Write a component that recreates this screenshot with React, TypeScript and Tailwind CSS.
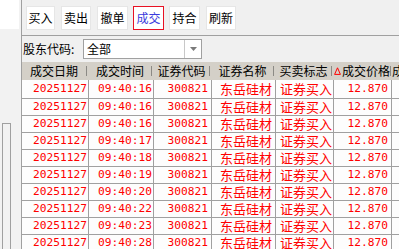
import React from 'react';

const cjk = "font-['Noto_Sans_CJK_SC',sans-serif]";
const mono = "font-['DejaVu_Sans_Mono','Liberation_Mono',monospace]";

const buttons = [
  { label: '买入', w: 'w-[29px]', ml: 'ml-0' },
  { label: '卖出', w: 'w-[30px]', ml: 'ml-[6px]' },
  { label: '撤单', w: 'w-[31px]', ml: 'ml-[6px]' },
  { label: '成交', w: 'w-[31px]', ml: 'ml-[5px]', active: true },
  { label: '持合', w: 'w-[31px]', ml: 'ml-[5px]' },
  { label: '刷新', w: 'w-[30px]', ml: 'ml-[6px]' },
];

// widths include the right grid line
const cols = ['w-[67px]', 'w-[65px]', 'w-[58px]', 'w-[64px]', 'w-[58px]', 'w-[58px]', 'w-[40px]'];

const times = ['16', '16', '16', '17', '18', '19', '20', '22', '23', '28'];

function Header() {
  const titles = ['成交日期', '成交时间', '证券代码', '证券名称', '买卖标志', '成交价格', '成交数量'];
  return (
    <div className="flex h-[18px] shrink-0 bg-[#d4d0c8] text-[12px] leading-none text-black">
      {titles.map((t, i) => (
        <div key={t} className={`${cols[i]} shrink-0 flex items-center ${cjk}`}>
          <div className="flex-1 flex items-center justify-center whitespace-nowrap">
            {i === 5 && (
              <svg width="7" height="8" viewBox="0 0 7 8" className="mr-[1px] shrink-0">
                <path d="M3.5 0.8 L6.4 7.4 L0.6 7.4 Z" fill="none" stroke="#ff0000" strokeWidth="1" />
              </svg>
            )}
            {t}
          </div>
          {i < 6 && <div className="w-px h-[10px] bg-[#8c8a85] mr-[2px] shrink-0" />}
        </div>
      ))}
    </div>
  );
}

function Row({ time, first }: { time: string; first: boolean }) {
  const cell = 'shrink-0 h-full flex items-center justify-end pr-[1px] border-r border-[#a0a0a0] whitespace-nowrap';
  return (
    <div
      className={`flex ${first ? 'h-[19px]' : 'h-[17px]'} shrink-0 border-b border-[#a0a0a0] bg-[#fdfdfd] text-[#ff0000] leading-none`}
    >
      <div className={`${cols[0]} ${cell} ${mono} text-[11.2px]`}>20251127</div>
      <div className={`${cols[1]} ${cell} ${mono} text-[11.2px]`}>09:40:{time}</div>
      <div className={`${cols[2]} ${cell} ${mono} text-[11.2px] pr-[3px]`}>300821</div>
      <div className={`${cols[3]} ${cell} ${cjk} text-[13px] pr-[3px] pb-[2px]`}>东岳硅材</div>
      <div className={`${cols[4]} ${cell} ${cjk} text-[13px] pb-[2px]`}>证券买入</div>
      <div className={`${cols[5]} ${cell} ${mono} text-[11.2px] pr-[3px]`}>12.870</div>
      <div className={`${cols[6]} shrink-0`} />
    </div>
  );
}

export default function App() {
  return (
    <div className="w-[399px] h-[249px] overflow-hidden flex bg-[#f0f0f0]">
      {/* 左侧面板 */}
      <div className="w-[22px] shrink-0 flex flex-col border-r border-[#a0a0a0] bg-[#f2f2f2]">
        <div className="w-[19px] h-[29px] bg-white" />
        <div className="mt-auto ml-[2px] w-[9px] h-[126px] border border-b-0 border-[#a0a0a0]" />
      </div>

      <div className="flex-1 flex flex-col min-w-0">
        {/* 工具栏 */}
        <div className="h-[36px] shrink-0 flex items-start pt-[6px] pl-[4px] border-b border-[#a0a0a0]">
          {buttons.map((b) => (
            <div
              key={b.label}
              className={`${b.w} ${b.ml} h-[24px] shrink-0 flex items-center justify-center bg-white text-[12px] ${cjk} ${
                b.active ? 'border border-[#e81123] text-[#3b3bdc]' : 'border border-[#e6e6e6] text-black'
              }`}
            >
              {b.label}
            </div>
          ))}
        </div>

        {/* 股东代码 */}
        <div className="h-[26px] shrink-0 flex items-center pl-[1px]">
          <span className={`text-[12px] text-black ${cjk} w-[60px]`}>股东代码:</span>
          <div className="w-[119px] h-[20px] flex bg-white border border-[#a0a0a0]">
            <div className={`flex-1 flex items-center pl-[3px] text-[12px] text-black ${cjk}`}>全部</div>
            <div className="w-[17px] border-l border-[#c8c8c8] flex items-center justify-center">
              <svg width="7" height="4" viewBox="0 0 7 4">
                <path d="M0 0 H7 L3.5 4 Z" fill="#7a7a7a" />
              </svg>
            </div>
          </div>
        </div>

        {/* 成交列表 */}
        <div className="flex-1 flex flex-col overflow-hidden">
          <Header />
          {times.map((t, i) => (
            <Row key={i} time={t} first={i === 0} />
          ))}
        </div>
      </div>
    </div>
  );
}
